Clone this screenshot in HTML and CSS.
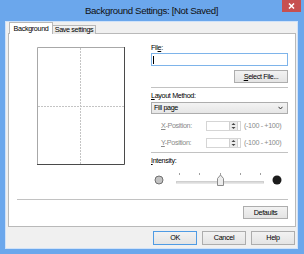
FILE: index.html
```html
<!DOCTYPE html>
<html>
<head>
<meta charset="utf-8">
<link rel="stylesheet" href="styles.css">
</head>
<body>
<div class="window">
  <div class="titlebar">
    <span class="tb-spacer"></span>
    <span class="title">Background Settings: [Not Saved]</span>
    <span class="close"><svg width="7" height="6" viewBox="0 0 7 6"><path d="M1 0.5 L6 5.5 M6 0.5 L1 5.5" stroke="#fff" stroke-width="1.5"/></svg></span>
  </div>
  <div class="client">
    <div class="tabs">
      <div class="tab active">Background</div>
      <div class="tab">Save settings</div>
    </div>
    <div class="panel">
      <div class="panel-top">
        <div class="preview-col">
          <svg class="preview" width="88" height="118" viewBox="0 0 88 118">
            <rect x="0" y="0" width="88" height="118" fill="#fff"/>
            <line x1="43.5" y1="1" x2="43.5" y2="117" stroke="#c4c4c4" stroke-width="1" stroke-dasharray="2 1"/>
            <line x1="1" y1="59.5" x2="87" y2="59.5" stroke="#c4c4c4" stroke-width="1" stroke-dasharray="2 1"/>
            <path d="M0.5 118 V0.5 H87" stroke="#a8a8a8" stroke-width="1" fill="none"/>
            <path d="M87.5 0 V117.5 H0" stroke="#4a4a4a" stroke-width="1" fill="none"/>
          </svg>
        </div>
        <div class="controls">
          <div class="label">Fil<u>e</u>:</div>
          <div class="input"><span class="caret"></span></div>
          <div class="row-right"><button class="btn btn-select"><u>S</u>elect File...</button></div>
          <div class="sep"></div>
          <div class="label"><u>L</u>ayout Method:</div>
          <div class="select">
            <span>Fill page</span>
            <svg width="5" height="4" viewBox="0 0 5 4"><path d="M0.5 0.8 L2.5 3 L4.5 0.8" stroke="#333" stroke-width="1" fill="none"/></svg>
          </div>
          <div class="pos-row">
            <span class="pos-label"><u>X</u>-Position:</span>
            <span class="spin"><span class="spin-btn"><svg width="7" height="8" viewBox="0 0 7 8"><path d="M3.5 1 L5.5 3 H1.5 Z M3.5 7 L5.5 5 H1.5 Z" fill="#444"/></svg></span></span>
            <span class="range">(-100 - +100)</span>
          </div>
          <div class="pos-row">
            <span class="pos-label"><u>Y</u>-Position:</span>
            <span class="spin"><span class="spin-btn"><svg width="7" height="8" viewBox="0 0 7 8"><path d="M3.5 1 L5.5 3 H1.5 Z M3.5 7 L5.5 5 H1.5 Z" fill="#444"/></svg></span></span>
            <span class="range">(-100 - +100)</span>
          </div>
          <div class="sep"></div>
          <div class="label"><u>I</u>ntensity:</div>
          <svg class="slider" width="137" height="18" viewBox="0 0 137 18">
            <circle cx="8" cy="9" r="4" fill="#c3c3c3" stroke="#707070" stroke-width="1"/>
            <circle cx="126" cy="9" r="4.5" fill="#1c1c1c"/>
            <line x1="28.5" y1="2" x2="28.5" y2="4" stroke="#a0a0a0"/>
            <line x1="48.5" y1="2" x2="48.5" y2="4" stroke="#a0a0a0"/>
            <line x1="69.5" y1="2" x2="69.5" y2="4" stroke="#a0a0a0"/>
            <line x1="89.5" y1="2" x2="89.5" y2="4" stroke="#a0a0a0"/>
            <line x1="109.5" y1="2" x2="109.5" y2="4" stroke="#a0a0a0"/>
            <rect x="25.5" y="10.5" width="87" height="1.5" fill="#e9e9e9" stroke="#cfcfcf" stroke-width="1"/>
            <polygon points="66.5,7.5 69.5,4 72.5,7.5 72.5,14.5 66.5,14.5" fill="#ededed" stroke="#8c8c8c" stroke-width="1"/>
          </svg>
        </div>
      </div>
      <div class="sep wide"></div>
      <div class="defaults-row"><button class="btn btn-defaults">Defaults</button></div>
    </div>
    <div class="buttons">
      <button class="btn btn-main btn-default">OK</button>
      <button class="btn btn-main">Cancel</button>
      <button class="btn btn-main">Help</button>
    </div>
  </div>
</div>
</body>
</html>
```

FILE: styles.css
```css
html, body {
  margin: 0;
  padding: 0;
}
body {
  width: 304px;
  height: 254px;
  overflow: hidden;
  font-family: "Liberation Sans", Arial, sans-serif;
  font-size: 7.2px;
  letter-spacing: -0.35px;
  color: #000;
}
u { text-decoration: underline; text-underline-offset: 1px; }

.window {
  box-sizing: border-box;
  width: 304px;
  height: 254px;
  background: #6ba7ec;
  padding: 0 6px 5px 5px;
  display: flex;
  flex-direction: column;
}

.titlebar {
  height: 21px;
  flex: none;
  display: grid;
  grid-template-columns: 20px 1fr 20px;
  align-items: start;
}
.title {
  align-self: center;
  text-align: center;
  font-size: 9.7px;
  letter-spacing: -0.38px;
  color: #111;
  line-height: 12px;
  margin-top: 1px;
}
.close {
  justify-self: end;
  margin-right: -3px;
  width: 19px;
  height: 12px;
  background: #c75050;
  display: flex;
  align-items: center;
  justify-content: center;
}

.client {
  flex: 1;
  min-height: 0;
  background: #f0f0f0;
  border: 1px solid #cfe2f9;
  display: flex;
  flex-direction: column;
  padding: 0 1px 3px 2px;
}

.tabs {
  flex: none;
  height: 12px;
  margin-bottom: -1px;
  padding-left: 1px;
  display: flex;
  align-items: flex-end;
  position: relative;
  z-index: 1;
}
.tab {
  box-sizing: border-box;
  height: 9px;
  width: 43px;
  border: 1px solid #b9b9b9;
  border-bottom: none;
  border-left: none;
  background: linear-gradient(#f3f3f3, #e6e6e6);
  line-height: 8px;
  text-align: center;
  color: #000;
}
.tab.active {
  height: 12px;
  width: 44px;
  border-left: 1px solid #b9b9b9;
  background: #fff;
  line-height: 11px;
}

.panel {
  flex: 1;
  min-height: 0;
  background: #fff;
  border: 1px solid #b9b9b9;
  display: flex;
  flex-direction: column;
}
.panel-top {
  height: 165px;
  flex: none;
  display: flex;
}
.preview-col {
  width: 116px;
  box-sizing: border-box;
  padding: 13px 0 0 28px;
}
.preview { display: block; }

.controls {
  width: 137px;
  margin-left: 26px;
  padding-top: 9px;
  display: flex;
  flex-direction: column;
}
.label {
  height: 9px;
  line-height: 9px;
}
.input {
  box-sizing: border-box;
  height: 13px;
  margin-top: 1px;
  border: 1px solid #7eb4ea;
  background: #fff;
  padding: 2px 0 0 1px;
}
.caret {
  display: block;
  width: 1px;
  height: 8px;
  background: #000;
}
.row-right {
  margin-top: 4px;
  display: flex;
  justify-content: flex-end;
}
.btn {
  box-sizing: border-box;
  height: 13px;
  padding: 0;
  margin: 0;
  font-family: inherit;
  font-size: 7.2px;
  letter-spacing: -0.35px;
  color: #000;
  background: linear-gradient(#f2f2f2, #e4e4e4);
  border: 1px solid #adadad;
  line-height: 11px;
  text-align: center;
}
.btn-select { width: 54px; }
.sep {
  height: 1px;
  border-top: 1px solid #c2c2c2;
  background: #fff;
  margin-top: 4px;
  flex: none;
}
.controls .sep + .label { margin-top: 2px; }
.controls .sep:nth-of-type(2) + .label { margin-top: 4px; }

.select {
  box-sizing: border-box;
  height: 12px;
  margin-top: 2px;
  border: 1px solid #adadad;
  background: linear-gradient(#f3f3f3, #e6e6e6);
  display: flex;
  align-items: center;
  justify-content: space-between;
  padding: 0 4px 0 2px;
  line-height: 10px;
}
.select svg { display: block; }

.pos-row {
  height: 10px;
  margin-top: 7px;
  display: grid;
  grid-template-columns: 52px 35px auto;
  column-gap: 3px;
  align-items: center;
  color: #8a8a8a;
}
.pos-label {
  padding-left: 10px;
  line-height: 10px;
}
.spin {
  box-sizing: border-box;
  height: 10px;
  border: 1px solid #d5d5d5;
  background: #fff;
  display: flex;
  justify-content: flex-end;
  padding: 0 2px 0 0;
}
.spin-btn {
  width: 7px;
  height: 8px;
  background: #ececec;
  border-left: 1px solid #d0d0d0;
  border-right: 1px solid #d0d0d0;
}
.spin-btn svg { display: block; }
.range { line-height: 10px; }

.slider {
  display: block;
  margin-top: 6px;
}

.sep.wide {
  margin: 0 7px 0 8px;
}
.defaults-row {
  margin-top: 5px;
  padding-right: 7px;
  display: flex;
  justify-content: flex-end;
}
.btn-defaults { width: 45px; }

.buttons {
  flex: none;
  height: 14px;
  margin-top: 4px;
  padding-right: 1px;
  display: flex;
  justify-content: flex-end;
  gap: 5px;
}
.btn-main {
  width: 44px;
  height: 14px;
  line-height: 12px;
}
.btn-default {
  border-color: #4f9be4;
}
```
